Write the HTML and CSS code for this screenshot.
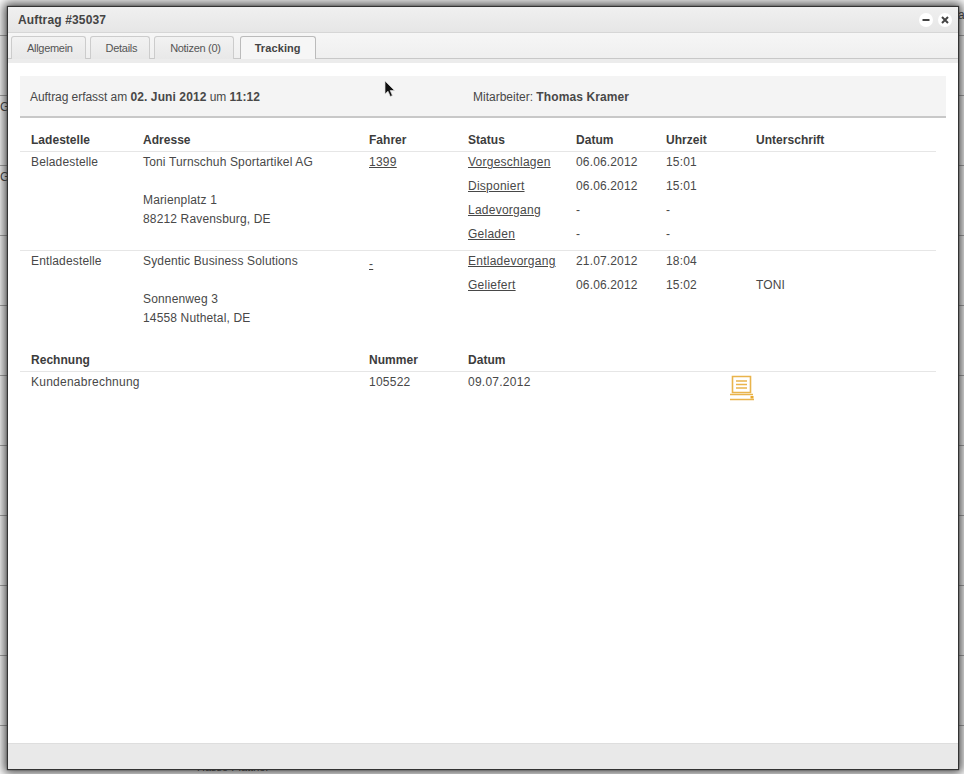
FILE: index.html
```html
<!DOCTYPE html>
<html lang="de">
<head>
<meta charset="utf-8">
<title>Auftrag #35037</title>
<link rel="stylesheet" href="styles.css">
</head>
<body>
<div class="backdrop">
  <div class="bg-row bg-top"></div>
  <div class="bg-row"><span class="bg-edge">G</span></div>
  <div class="bg-row"><span class="bg-edge">G</span></div>
  <div class="bg-row"></div>
  <div class="bg-row"></div>
  <div class="bg-row"></div>
  <div class="bg-row"></div>
  <div class="bg-row"></div>
  <div class="bg-row"></div>
  <div class="bg-row"></div>
  <div class="bg-row bg-foot">Hasso Plattner</div>
  <span class="bg-corner">a</span>
</div>
<section class="modal">
  <header class="titlebar">
    <h1 class="title">Auftrag #35037</h1>
    <div class="win-btns">
      <span class="win-btn"><svg width="8" height="8" viewBox="0 0 8 8"><rect x="0.5" y="3" width="7" height="2" fill="#444"/></svg></span>
      <span class="win-btn"><svg width="8" height="8" viewBox="0 0 8 8"><path d="M1 1L7 7M7 1L1 7" stroke="#444" stroke-width="2"/></svg></span>
    </div>
  </header>
  <nav class="tabs">
    <span class="tab">Allgemein</span>
    <span class="tab">Details</span>
    <span class="tab">Notizen (0)</span>
    <span class="tab active">Tracking</span>
  </nav>
  <main class="content">
    <div class="info">
      <div class="info-left">Auftrag erfasst am <b>02. Juni 2012</b> um <b>11:12</b></div>
      <div>Mitarbeiter: <b>Thomas Kramer</b></div>
    </div>
    <div class="sheet">
      <div class="row head">
        <div>Ladestelle</div><div>Adresse</div><div>Fahrer</div>
        <div class="sub"><div>Status</div><div>Datum</div><div>Uhrzeit</div><div>Unterschrift</div></div>
      </div>
      <div class="row stop">
        <div>Beladestelle</div>
        <div>Toni Turnschuh Sportartikel AG<br><br>Marienplatz 1<br>88212 Ravensburg, DE</div>
        <div><a href="#">1399</a></div>
        <div class="subs">
          <div class="sub"><div><a href="#">Vorgeschlagen</a></div><div>06.06.2012</div><div>15:01</div><div></div></div>
          <div class="sub"><div><a href="#">Disponiert</a></div><div>06.06.2012</div><div>15:01</div><div></div></div>
          <div class="sub"><div><a href="#">Ladevorgang</a></div><div>-</div><div>-</div><div></div></div>
          <div class="sub"><div><a href="#">Geladen</a></div><div>-</div><div>-</div><div></div></div>
        </div>
      </div>
      <div class="row stop last">
        <div>Entladestelle</div>
        <div>Sydentic Business Solutions<br><br>Sonnenweg 3<br>14558 Nuthetal, DE</div>
        <div class="dash"><a href="#">-</a></div>
        <div class="subs">
          <div class="sub"><div><a href="#">Entladevorgang</a></div><div>21.07.2012</div><div>18:04</div><div></div></div>
          <div class="sub"><div><a href="#">Geliefert</a></div><div>06.06.2012</div><div>15:02</div><div>TONI</div></div>
        </div>
      </div>
      <div class="row head invoice-head">
        <div>Rechnung</div><div></div><div>Nummer</div>
        <div class="sub"><div>Datum</div></div>
      </div>
      <div class="row invoice">
        <div>Kundenabrechnung</div><div></div><div>105522</div>
        <div class="sub inv-sub"><div>09.07.2012</div><div class="inv-icon">
          <svg width="25" height="26" viewBox="0 0 25 26" fill="none" stroke="#e9b44c"><path d="M2.5 1.5H20.5V17.5H2.5Z" stroke-width="1.6"/><path d="M6 6H17M6 9.5H17M6 13H17" stroke-width="1.5"/><path d="M0 19.5H23M0 24.5H24" stroke-width="1.5"/><rect x="20.5" y="21" width="3" height="2.5" fill="#e9a92c" stroke="none"/></svg>
        </div></div>
      </div>
    </div>
  </main>
  <footer class="modal-foot"></footer>
</section>
<svg class="cursor" width="12" height="19" viewBox="0 0 12 19"><path d="M1 1V14L4 11.2L6.3 16.5L8.4 15.6L6.2 10.5H10.5Z" fill="#111" stroke="#ddd" stroke-width=".7"/></svg>
</body>
</html>
```
FILE: styles.css
```css
* { box-sizing: border-box; }
html, body { margin: 0; height: 100%; }
body {
  width: 964px;
  height: 774px;
  overflow: hidden;
  position: relative;
  background: #fff;
  font: 12px/19px "Liberation Sans", Arial, sans-serif;
  color: #484848;
}
.backdrop { height: 774px; padding-top: 35px; position: relative; color: #444; overflow: hidden; }
.bg-row { height: 70px; border-top: 1px solid #aaa; padding-top: 3px; }
.bg-top { height: 60px; }
.bg-edge { display: block; line-height: 17px; }
.bg-foot { font-size: 11px; padding: 34px 0 0 197px; line-height: 14px; }
.bg-corner { position: absolute; left: 958px; top: 6px; }
.modal {
  position: absolute;
  left: 8px;
  top: 7px;
  width: 950px;
  height: 762px;
  display: flex;
  flex-direction: column;
  background: #fff;
  box-shadow: 0 0 1px 1px #333, 0 0 10px 4px rgba(30,30,30,.8);
}
.titlebar {
  height: 26px;
  flex: none;
  display: flex;
  align-items: center;
  justify-content: space-between;
  padding: 2px 6px 0 10px;
  background: linear-gradient(#f0f0f0, #e6e6e6);
  border-bottom: 1px solid #d6d6d6;
}
.title { margin: 0; font-size: 12px; font-weight: bold; color: #444; letter-spacing: .15px; }
.win-btns { display: flex; gap: 5px; margin-top: -2px; }
.win-btn {
  width: 14px;
  height: 14px;
  border-radius: 50%;
  background: #fff;
  display: flex;
  align-items: center;
  justify-content: center;
}
.tabs {
  height: 30px;
  flex: none;
  display: flex;
  gap: 4px;
  align-items: flex-start;
  padding: 3px 0 0 3px;
  background: linear-gradient(#f6f6f6, #efefef 25px, #c8c8c8 25px, #c8c8c8 26px, #ececec 26px);
}
.tab {
  height: 23px;
  padding: 0 12px 0 15px;
  line-height: 23px;
  font-size: 11px;
  letter-spacing: -.3px;
  color: #555;
  background: linear-gradient(#f2f2f2, #e8e8e8);
  border: 1px solid #ccc;
  border-bottom: 0;
  border-radius: 3px 3px 0 0;
}
.tab.active {
  font-weight: bold;
  letter-spacing: .1px;
  color: #444;
  background: #f6f6f6;
  margin-left: 2px;
  padding: 0 14px;
  border-color: #bbb;
}
.content { flex: 1; padding: 13px 12px 0; background: #fff; }
.info {
  height: 42px;
  display: flex;
  align-items: center;
  padding: 2px 0 0 10px;
  background: #f4f4f4;
  border-bottom: 2px solid #c8c8c8;
}
.info-left { width: 443px; letter-spacing: -.05px; }
.info b { letter-spacing: .1px; }
.sheet { width: 916px; margin-top: 13px; }
.row {
  display: grid;
  grid-template-columns: 112px 226px 99px 1fr;
  padding-left: 11px;
  letter-spacing: .15px;
}
.sub { display: grid; grid-template-columns: 108px 90px 90px 1fr; }
.head {
  font-weight: bold;
  color: #3c3c3c;
  letter-spacing: .03px;
  height: 21px;
  border-bottom: 1px solid #e6e6e6;
}
.stop { height: 99px; padding-top: 1px; border-bottom: 1px solid #e6e6e6; }
.stop.last { height: 76px; border-bottom: 0; }
.subs { display: flex; flex-direction: column; gap: 5px; }
.dash { padding-top: 3px; }
a { color: #484848; text-decoration: underline; letter-spacing: .25px; }
.invoice-head { margin-top: 23px; height: 22px; padding-top: 1px; }
.invoice { padding-top: 1px; letter-spacing: .25px; }
.inv-sub { grid-template-columns: 262px 1fr; }
.inv-icon { height: 26px; padding-top: 2px; }
.inv-icon svg { display: block; }
.modal-foot {
  height: 26px;
  flex: none;
  background: #e9e9e9;
  border-top: 1px solid #dedede;
}
.cursor { position: absolute; left: 384px; top: 80px; }
```
